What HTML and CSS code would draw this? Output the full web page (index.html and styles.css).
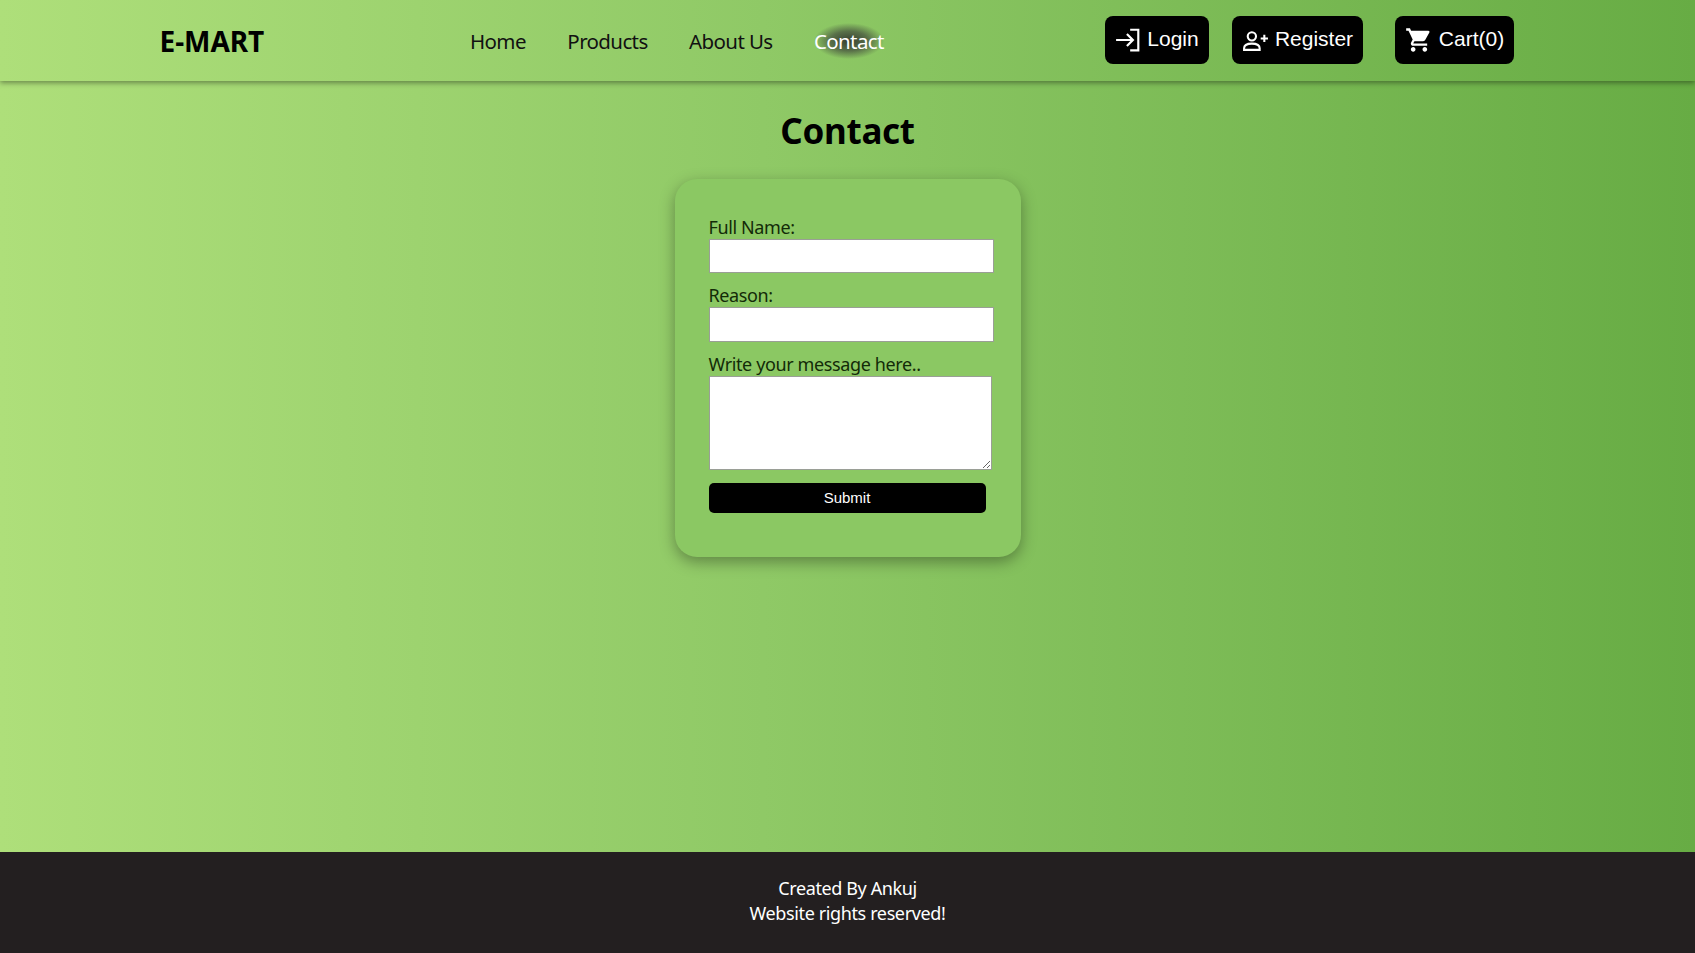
FILE: index.html
```html
<!DOCTYPE html>
<html lang="en">
<head>
<meta charset="utf-8">
<title>E-MART Contact</title>
<link rel="stylesheet" href="styles.css">
</head>
<body>
<header class="topbar">
  <a class="logo" href="#">E-MART</a>
  <nav class="nav">
    <a href="#">Home</a>
    <a href="#">Products</a>
    <a href="#">About Us</a>
    <a class="active" href="#">Contact</a>
  </nav>
  <div class="actions">
    <a class="btn btn-login" href="#">
      <svg viewBox="0 0 24 24" width="26" height="26" fill="none" stroke="currentColor" stroke-width="2"><path d="M1 12h15M11 6.500l5.500 5.500-5.500 5.500M14 2.500h7.500v19H14"/></svg>
      <span>Login</span>
    </a>
    <a class="btn btn-register" href="#">
      <svg viewBox="0 0 26 24" width="27" height="25" fill="none" stroke="currentColor" stroke-width="2"><circle cx="9.500" cy="8" r="4"/><path d="M2 21v-1.500c0-3 3.500-4.500 7.500-4.500s7.500 1.500 7.500 4.500V21zM18 10h7M21.500 6.500v7"/></svg>
      <span>Register</span>
    </a>
    <a class="btn btn-cart" href="#">
      <svg viewBox="0 0 24 24" width="28" height="28" fill="currentColor"><path d="M7 18c-1.100 0-2 .9-2 2s.9 2 2 2 2-.9 2-2-.9-2-2-2zM1 2v2h2l3.600 7.590-1.350 2.450c-.16.280-.25.610-.25.960 0 1.100.9 2 2 2h12v-2H7.420c-.14 0-.25-.11-.25-.25l.03-.12.9-1.630h7.450c.75 0 1.410-.41 1.750-1.030l3.580-6.490A1 1 0 0 0 20 4H5.210l-.94-2H1zm16 16c-1.100 0-2 .9-2 2s.9 2 2 2 2-.9 2-2-.9-2-2-2z"/></svg>
      <span>Cart(0)</span>
    </a>
  </div>
</header>
<main class="content">
  <h1 class="title">Contact</h1>
  <form class="card">
    <label class="field-label" for="name">Full Name:</label>
    <input class="field field-name" id="name" type="text">
    <label class="field-label" for="reason">Reason:</label>
    <input class="field field-reason" id="reason" type="text">
    <label class="field-label" for="msg">Write your message here..</label>
    <textarea class="area" id="msg"></textarea>
    <button class="submit" type="button">Submit</button>
  </form>
</main>
<footer class="footer">
  <p>Created By Ankuj</p>
  <p>Website rights reserved!</p>
</footer>
</body>
</html>
```
FILE: styles.css
```css
* { box-sizing: border-box; }
html, body { margin: 0; height: 100%; }
body {
  display: flex;
  flex-direction: column;
  height: 953px;
  overflow: hidden;
  font-family: "Noto Sans", "Open Sans", sans-serif;
  color: #000;
  background: linear-gradient(90deg, #aedf7a 0%, #8fc966 45%, #67ac44 100%);
}
a { text-decoration: none; color: inherit; }

.topbar {
  flex: none;
  display: flex;
  align-items: center;
  height: 81px;
  padding: 0 181px 0 159.500px;
  box-shadow: 0 2px 5px rgba(0, 0, 0, .38);
}
.logo {
  width: 310.500px;
  font-size: 28px;
  font-weight: 700;
  letter-spacing: -.05px;
}
.nav {
  display: flex;
  align-items: center;
  gap: 41.500px;
  font-size: 20.500px;
  letter-spacing: -.62px;
}
.nav a { color: #111; }
.nav a.active {
  padding: 4px 0;
  color: #fff;
  background: radial-gradient(ellipse closest-side, rgba(40, 40, 40, .85) 0%, rgba(55, 55, 55, .6) 55%, rgba(60, 60, 60, 0) 100%);
}
.actions {
  margin-left: auto;
  margin-bottom: 1px;
  display: flex;
  font-family: "Liberation Sans", Arial, sans-serif;
  font-size: 21px;
}
.btn {
  display: flex;
  align-items: center;
  justify-content: center;
  gap: 6px;
  height: 48px;
  background: #000;
  color: #fff;
  border-radius: 8px;
}
.btn span { position: relative; top: -1px; }
.btn-login { width: 104px; margin-right: 23px; }
.btn-register { width: 131px; margin-right: 32px; }
.btn-cart { width: 119px; }

.content {
  flex: 1;
  display: flex;
  flex-direction: column;
  align-items: center;
}
.title {
  margin: 26px 0 0;
  font-size: 35px;
  letter-spacing: -.3px;
  font-weight: 700;
  line-height: 48px;
}
.card {
  width: 346px;
  height: 378px;
  margin-top: 24px;
  padding: 37px 25px 0 34px;
  border-radius: 22px;
  background: #8bc863;
  box-shadow: 0 5px 15px rgba(0, 0, 0, .34);
  display: flex;
  flex-direction: column;
  align-items: flex-start;
}
.field-label {
  font-size: 18px;
  letter-spacing: -.38px;
  line-height: 23px;
  color: #132b08;
}
.field, .area {
  display: block;
  background: #fff;
  border: 1px solid #9a9f96;
  padding: 0;
  margin: 0;
}
.field {
  width: 285px;
  margin-bottom: 11px;
}
.field-name { height: 33.500px; }
.field-reason { height: 35px; }
.area {
  width: 283px;
  height: 94px;
  resize: both;
  margin-bottom: 13px;
}
.submit {
  width: 277px;
  height: 30px;
  border: 0;
  border-radius: 5px;
  background: #000;
  color: #fff;
  font: 15px "Liberation Sans", Arial, sans-serif;
  padding-bottom: 1px;
}

.footer {
  flex: none;
  height: 101px;
  padding-top: 24px;
  background: #231f20;
  color: #fff;
  text-align: center;
  font-size: 18px;
  letter-spacing: -.38px;
  line-height: 25px;
}
.footer p { margin: 0; }
```
